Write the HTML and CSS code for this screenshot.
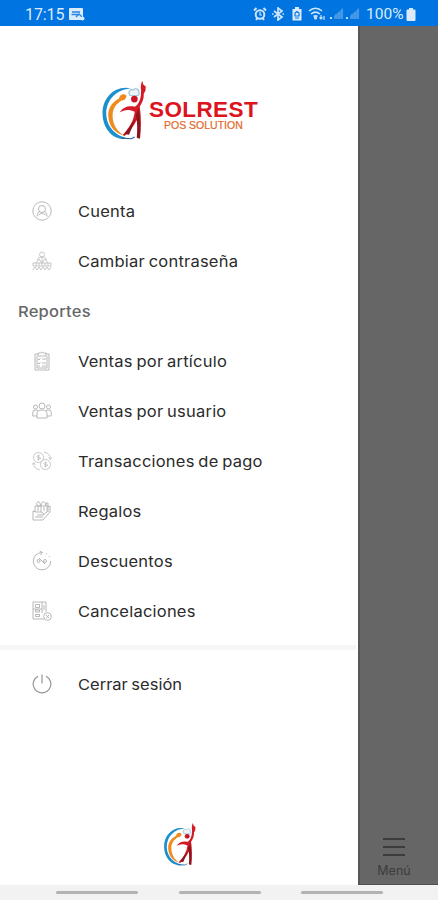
FILE: index.html
```html
<!DOCTYPE html>
<html lang="es">
<head>
    <meta charset="UTF-8">
    <meta name="viewport" content="width=device-width, initial-scale=1.0">
    <title>Solrest - Menú</title>
    <link rel="stylesheet" href="styles.css">
</head>
<body>
    <!-- Logo mark, used in the header and in the footer -->
    <svg class="sprite" aria-hidden="true">
        <symbol id="logoMark" viewBox="30 25 145 185">
            <path fill="#1c8fce" d="M122 56C76 45 37 82 37 130c0 44 28 76 63 77l22-1c-42-3-73-32-74-74C48 88 80 58 122 56z"/>
            <path fill="#f08a1d" d="M86 86c-22 12-33 30-32 51 1 31 20 54 47 60-20-12-34-32-34-60 0-20 9-34 27-45 9 0 15-7 14-15-7-7-20-3-22 9z"/>
            <path fill="#edf4f9" stroke="#96bcd6" stroke-width="3" d="M119 77c-9-12 2-20 9-16 7-7 19-3 17 6 4 4 1 8-3 11z"/>
            <circle cx="132" cy="88" r="10" fill="#c81525"/>
            <path fill="#d41b25" d="M152 62c-2-10 0-21 3-29l4 12 7 5-1 13-5 9c1 16-5 28-12 38 5 32 4 63 1 95l-8-3c1-22 1-40-2-52-9 18-21 35-36 48l-6-3c20-21 33-42 36-69-17-9-31-7-45 2 11-17 28-21 45-17 14-9 19-25 19-49z"/>
            <path fill="#861720" d="M144 115c6 30 7 60 4 91l-9-3c3-28 2-48-3-65zM103 192l33-47-20 49z"/>
            <path fill="none" stroke="#27639a" stroke-width="3" d="M92 205l31 1 10-5"/>
        </symbol>
    </svg>

    <header class="status-bar">
        <div class="status-left">
            <span class="clock">17:15</span>
            <svg class="shot-icon" viewBox="0 0 16 13"><rect width="14" height="12" rx="1" fill="#d9ebfd"/><path d="M3 4h8M2.500 6.500h8M7 9l3-3 3 3" fill="none" stroke="#2b84df" stroke-width="1.300"/><circle cx="13.500" cy="10.500" r="2" fill="#d9ebfd"/></svg>
        </div>
        <div class="status-right">
            <svg width="14" height="14" viewBox="0 0 14 14" fill="none" stroke="#cde5fc" stroke-width="2"><circle cx="7" cy="7.500" r="4.300"/><path d="M1 3.500L3.500 1M13 3.500L10.500 1M3 13l1.500-2M11 13l-1.500-2"/><path d="M7 5v3h2" stroke-width="1.200"/></svg>
            <svg width="14" height="14" viewBox="0 0 14 14" fill="none" stroke="#cde5fc" stroke-width="1.700"><path d="M3 4l8 6-4 3V1l4 3-8 6"/><path d="M1 7h1.500M11.500 7H13"/></svg>
            <svg class="saver" width="10" height="14" viewBox="0 0 10 14"><path d="M3 0h4v2h2.500v11.500h-9V2H3z" fill="#d9ebfd"/><path d="M3 9V6l2-1.500L7 6v3zM3 11h4" fill="none" stroke="#0d76df" stroke-width="1.200"/></svg>
            <svg class="wifi" width="18" height="14" viewBox="0 0 18 14" fill="none" stroke="#cde5fc" stroke-width="1.600"><path d="M1 4c4-3.500 9-3.500 13 0M3 7c3-2.500 6-2.500 9 0M5.500 9.500c1.500-1 2.500-1 4 0"/><circle cx="7.500" cy="11" r=".8"/><path d="M13 8v4M11.500 10.500L13 12l1.500-1.500M16 13V9" stroke-width="1.200"/></svg>
            <svg class="signal" width="14" height="12" viewBox="0 0 14 12"><path d="M0 9h2v2H0z" fill="#b9dafa"/><path d="M4 11V8l9-8v11z" fill="#378fe6"/><path d="M6 6v5M9 4v7M12 1v10" stroke="#5aa5ec"/></svg>
            <svg class="signal" width="14" height="12" viewBox="0 0 14 12"><path d="M0 9h2v2H0z" fill="#b9dafa"/><path d="M4 11V8l9-8v11z" fill="#378fe6"/><path d="M6 6v5M9 4v7M12 1v10" stroke="#5aa5ec"/></svg>
            <span class="battery-text">100%</span>
            <svg width="10" height="13" viewBox="0 0 10 13"><path d="M3 0h4v1.500h1.500q1 0 1 1V12q0 1-1 1h-7q-1 0-1-1V2.500q0-1 1-1H3z" fill="#d9ebfd"/></svg>
        </div>
    </header>

    <div class="screen">
        <aside class="drawer">
            <div class="brand">
                <svg class="brand-mark"><use href="#logoMark"/></svg>
                <div class="brand-text">
                    <span class="brand-name">SOLREST</span>
                    <span class="brand-sub">POS SOLUTION</span>
                </div>
            </div>

            <nav class="menu">
                <a class="menu-item">
                    <svg class="icon" viewBox="0 0 20 20"><circle cx="10" cy="10" r="9.200"/><circle cx="10" cy="8" r="3.500"/><path d="M5 15.500c0-3 1.500-5 3-5M15 15.500c0-3-1.500-5-3-5M6.500 14l3.500-2 3.500 2"/></svg>
                    <span class="label">Cuenta</span>
                </a>
                <a class="menu-item">
                    <svg class="icon light" viewBox="0 0 20 20"><circle cx="10" cy="3.500" r="2.500"/><path d="M5.500 9c0-4 9-4 9 0M10 6v6M7 8l-3 4M13 8l3 4M7 8l3 4 3-4M1 12h18v3H1zM4 12v3M7 12v3M10 12v3M13 12v3M16 12v3M1 19l2-3 2 3 2-3 2 3 2-3 2 3 2-3 2 3 2-3"/></svg>
                    <span class="label">Cambiar contraseña</span>
                </a>
                <h2 class="menu-title"><span class="title-text">Reportes</span></h2>
                <a class="menu-item">
                    <svg class="icon" viewBox="0 0 20 20"><path d="M6 3H3v16h14V3h-3M6 5V2h2.500q1.500-2 3 0H14v3zM5 5v12h10V5"/><path d="M6 8l1 1 1.500-2M10 8h4M6 12l1 1 1.500-2M10 12h4M6 15h2M10 15h4"/></svg>
                    <span class="label">Ventas por artículo</span>
                </a>
                <a class="menu-item">
                    <svg class="icon" viewBox="0 0 20 20"><circle cx="10" cy="5" r="3"/><circle cx="3.500" cy="6" r="2"/><circle cx="16.500" cy="6" r="2"/><path d="M5 17v-4q0-4 5-4t5 4v4zM5 15H.8v-4q0-2 2.700-2 2 0 2.500 1M15 15h4.200v-4q0-2-2.700-2-2 0-2.500 1"/></svg>
                    <span class="label">Ventas por usuario</span>
                </a>
                <a class="menu-item">
                    <svg class="icon light" viewBox="0 0 20 20"><circle cx="6.500" cy="6.500" r="5"/><circle cx="13.500" cy="13.500" r="5"/><path d="M8 5q-3-1-3 .5t3 1.500-3 1.500M6.500 3.500v6M15 12q-3-1-3 .5t3 1.500-3 1.500M13.500 10.500v6M12 1q6 1 6.500 7M16.500 6.500l2 2 1-2M8 19q-6-1-6.500-7M.5 13.500l1-2 2 2"/></svg>
                    <span class="label">Transacciones de pago</span>
                </a>
                <a class="menu-item">
                    <svg class="icon" viewBox="0 0 20 20"><path d="M3 5h13v6M3 5v6M1 10l3 1h6l2 3M1 19V10M1 19h10l7-8V5l-3 1v5l-4 3H5M9 5v6M8 5Q3 4 5 1.500T9 5q0-5 3-4t1 4M14 5V2h2v3M6 5v5M12 6v4M3 16h8"/></svg>
                    <span class="label">Regalos</span>
                </a>
                <a class="menu-item">
                    <svg class="icon" viewBox="0 0 20 20"><path d="M10 1.500A8.700 8.700 0 1 0 18.700 10M7.500 0l3 1.500-2 2.500M14 2.500l1 .7M17 5l.7 1M7 7l6 6"/><circle cx="6.500" cy="10" r="1.500"/><circle cx="13" cy="10" r="1.500"/></svg>
                    <span class="label">Descuentos</span>
                </a>
                <a class="menu-item">
                    <svg class="icon" viewBox="0 0 20 20"><path d="M12 18H1V1h13v10M3.500 3.500h4v3h-4zM3.500 9h4v2h-4zM3.500 13.500h4v2h-4zM10 1v11M12 4v5M1 8h9"/><circle cx="15.500" cy="15.500" r="3.800"/><path d="M14 14l3 3M17 14l-3 3"/></svg>
                    <span class="label">Cancelaciones</span>
                </a>
            </nav>

            <div class="divider"></div>

            <a class="menu-item logout">
                <svg class="icon dark" viewBox="0 0 20 20"><path d="M6 2.200a8.800 8.800 0 1 0 8 0M10 .5v9"/></svg>
                <span class="label">Cerrar sesión</span>
            </a>

            <svg class="footer-mark"><use href="#logoMark"/></svg>
        </aside>

        <div class="backdrop">
            <div class="tab">
                <span class="burger"></span>
                <span class="tab-label">Menú</span>
            </div>
        </div>
    </div>

    <footer class="nav-bar">
        <span class="nav-hint"></span>
        <span class="nav-hint"></span>
        <span class="nav-hint"></span>
    </footer>
</body>
</html>
```

FILE: styles.css
```css
* {
    margin: 0;
    padding: 0;
    box-sizing: border-box;
}

body {
    width: 438px;
    height: 900px;
    display: flex;
    flex-direction: column;
    overflow: hidden;
    background: #fff;
    font-family: Inter, "Open Sans", sans-serif;
}

.sprite {
    display: none;
}

/* Android status bar */
.status-bar {
    height: 26px;
    padding: 2px 22px 0 25px;
    display: flex;
    justify-content: space-between;
    align-items: center;
    background: #0074e0;
    color: #d9ebfd;
    font-family: Roboto, sans-serif;
    font-size: 16px;
}

.status-left,
.status-right {
    display: flex;
    align-items: center;
}

.clock {
    width: 44px;
    letter-spacing: -0.1px;
}

.shot-icon {
    width: 16px;
    height: 13px;
}

.status-right {
    gap: 4px;
}

.saver {
    margin-left: 3px;
}

.wifi {
    margin-left: 2px;
}

.signal {
    margin-right: -2px;
}

.battery-text {
    width: 39px;
    margin-left: 4px;
    margin-right: -3px;
    font-size: 15.5px;
}

/* Drawer */
.screen {
    height: 859px;
    display: flex;
}

.drawer {
    width: 358px;
    display: flex;
    flex-direction: column;
    background: #fff;
}

.brand {
    height: 160px;
    padding: 52px 0 0 100px;
    display: flex;
}

.brand-mark {
    width: 49px;
    height: 62px;
}

.brand-text {
    padding-top: 21px;
    display: flex;
    flex-direction: column;
    font-family: "Liberation Sans", Arial, sans-serif;
    white-space: nowrap;
}

.brand-name {
    line-height: 21px;
    font-size: 22.5px;
    font-weight: 700;
    letter-spacing: 0.4px;
    color: #dc1420;
}

.brand-sub {
    padding-left: 15px;
    line-height: 10px;
    font-size: 10.5px;
    color: #e2692c;
    -webkit-text-stroke: 0.2px #e2692c;
}

.menu-item {
    height: 50px;
    padding-left: 31.5px;
    display: flex;
    align-items: center;
    gap: 26px;
}

.icon {
    width: 20px;
    height: 20px;
    fill: none;
    stroke: #b0b0b0;
    stroke-width: 0.9;
}

.icon.light {
    stroke: #c2c2c2;
}

.icon.dark {
    stroke: #969696;
    stroke-width: 1.2;
}

/* Wide letterforms */
.label,
.title-text {
    display: inline-block;
    transform: scaleX(1.1);
    transform-origin: left center;
    font-size: 15px;
    letter-spacing: 0.2px;
    white-space: nowrap;
}

.label {
    word-spacing: -1px;
    color: #2b2b2b;
}

.menu-title {
    height: 50px;
    padding-left: 18px;
    line-height: 51px;
    font-size: 15px;
    font-weight: 500;
    color: #666;
}

.divider {
    height: 5px;
    margin-top: 9px;
    margin-right: 2px;
    background: #f6f6f6;
}

.logout {
    margin-top: 9px;
}

.logout .label {
    letter-spacing: 0;
}

.footer-mark {
    width: 36px;
    height: 45px;
    margin: 112px 0 0 162px;
}

/* Dimmed page behind the drawer */
.backdrop {
    flex: 1;
    display: flex;
    flex-direction: column;
    justify-content: flex-end;
    background: #666;
    border-left: 2px solid #565656;
    border-bottom: 1px solid #505050;
}

.tab {
    width: 68px;
    padding-bottom: 6px;
    display: flex;
    flex-direction: column;
    align-items: center;
    gap: 7px;
}

.burger {
    width: 22px;
    height: 18px;
    border-top: 2px solid #3c3c3c;
    border-bottom: 2px solid #3c3c3c;
    background: linear-gradient(#3c3c3c, #3c3c3c) center / 100% 2px no-repeat;
}

.tab-label {
    line-height: 15px;
    font-size: 12.5px;
    color: #3d3d3d;
}

/* Gesture hints */
.nav-bar {
    height: 15px;
    padding: 6px 55px 0 56px;
    display: flex;
    justify-content: space-between;
    background: #f2f2f2;
}

.nav-hint {
    width: 82px;
    height: 3px;
    border-radius: 2px;
    background: #b3b3b3;
}
```
